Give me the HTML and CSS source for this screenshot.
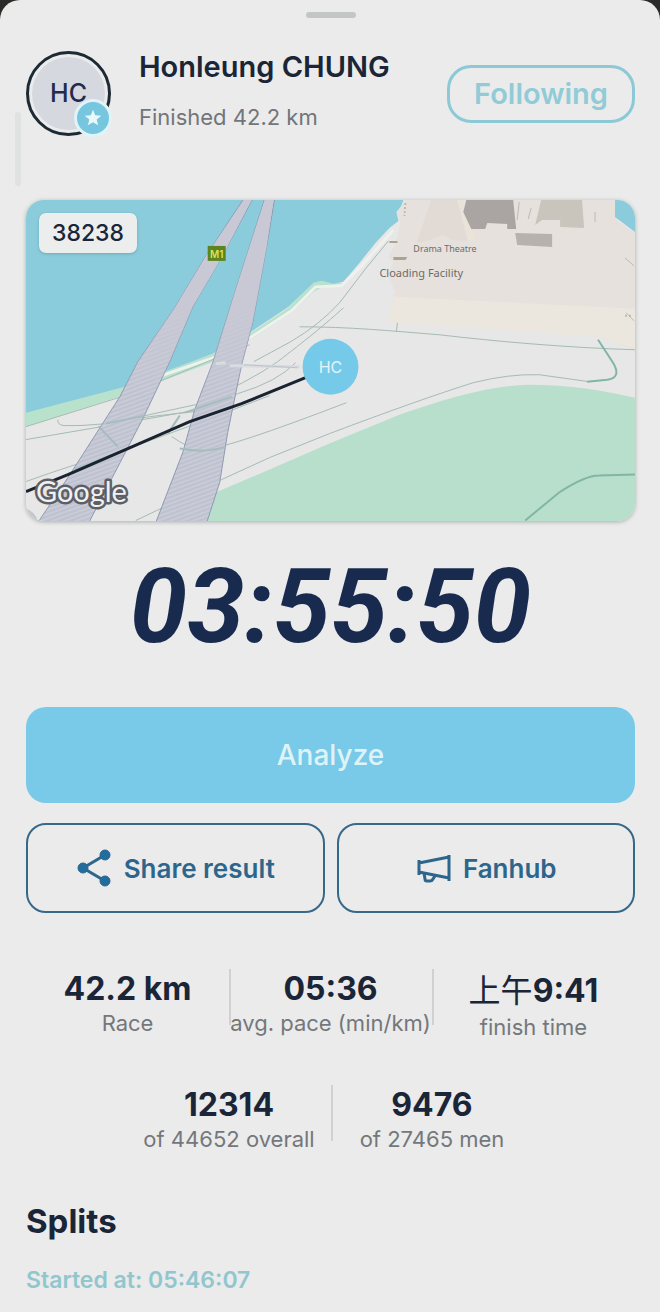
FILE: index.html
```html
<!DOCTYPE html>
<html lang="en">
  <head>
    <meta charset="utf-8">
    <meta name="viewport" content="width=device-width, initial-scale=1">
    <title>Honleung CHUNG - 42.2 km</title>
    <link rel="stylesheet" href="styles.css">
  </head>
  <body>
    <main class="sheet">
      <span class="handle"></span>
      <span class="scroll-thumb"></span>

      <header class="runner">
        <div class="avatar">
          <span class="avatar-initials">HC</span>
          <span class="avatar-badge">
            <svg viewBox="0 0 24 24" width="20" height="20" fill="#e9f8fa">
              <path d="M12 2l2.700 6.600 7.300.600-5.600 4.600 1.800 7L12 17l-6.200 3.800 1.800-7L2 9.200l7.300-.600z"/>
            </svg>
          </span>
        </div>
        <div class="runner-info">
          <h1>Honleung CHUNG</h1>
          <p>Finished 42.2 km</p>
        </div>
        <button class="follow" type="button">Following</button>
      </header>

      <section class="map">
        <svg class="map-canvas" viewBox="26 200 610 322" role="img" aria-label="Course map">
          <defs>
            <pattern id="hatch" width="4" height="4" patternUnits="userSpaceOnUse" patternTransform="rotate(-20)">
              <rect width="4" height="4" fill="#c9cbd6"/>
              <path d="M0 2h4" stroke="#b4b9ca"/>
            </pattern>
            <linearGradient id="deck" x1="0" y1="0" x2="0" y2="1">
              <stop offset="0.300" stop-color="#c9c9d5"/>
              <stop offset="0.600" stop-color="#c9c9d5" stop-opacity="0"/>
            </linearGradient>
          </defs>
          <rect x="26" y="200" width="610" height="322" fill="#e6e7e6"/>

          <!-- water and shore -->
          <path fill="#b9e2cd" d="M26 408L125 384L214 354L250 334L289 308L312 284L322 279L344 284L326 286L314 292L292 313L252 339L214 362L125 395L26 427z"/>
          <path fill="#8accdb" d="M26 200H404L402 206L397 212L399 221L390 228L376 243L360 263L344 282L334 284L322 281L314 283L289 307L250 333L213 354L170 370L125 387L26 413z"/>
          <path fill="none" stroke="#eef1ee" stroke-width="3" d="M162 376L214 358L252 337L292 311L316 287L342 286L362 266L394 230"/>

          <!-- opera house precinct -->
          <path fill="#e6e1dc" d="M405 200H616L618 221L636 233V350L600 337L388 322L395 296L389 292L389 256L396 244L401 223L398 213z"/>
          <path fill="#e6e7e6" d="M386 254L394 262L389 274L396 294L384 296z"/>
          <path fill="#ece7de" d="M395 297L636 309V349L600 337L388 322z"/>
          <path fill="#e2dad5" d="M432 200H458L468 241L452 240L443 235L431 240L417 243z"/>
          <path fill="#e9e3d9" d="M458 200H466L476 238L470 241z"/>
          <path fill="#aaa5a2" d="M467 200H514L517 229H508V224L488 223L486 229H472L464 212z"/>
          <path fill="#c9c5bd" d="M542 200H583L585 228L561 227V220H543L536 225z"/>
          <path fill="#b7b2ae" d="M516 233L553 234V247L518 245z"/>
          <path fill="#8accdb" d="M616 200H636V232L616 217z"/>
          <path fill="#aaa591" d="M394 257L408 257L406 260H394zM390 241H398V243H390z"/>
          <path fill="none" stroke="#bdb9b2" d="M532 208L529 219M520 202L518 220M596 212V222M626 258L635 266M627 313L635 321"/>
          <path fill="none" stroke="#b9bbb4" stroke-dasharray="2 2" stroke-width="2" d="M406 203L405 216M626 316H634"/>

          <!-- park -->
          <path fill="#b7dfcb" d="M206 522L216 493L270 470L330 444L400 415C450 398 490 386 530 385C570 385 605 391 636 398V522z"/>

          <!-- footpaths -->
          <g fill="none" stroke="#a5bbb4">
            <path d="M389 241L366 269L340 303Q320 325 291 342L254 362"/>
            <path d="M300 327C350 327 390 331 440 335C500 342 570 348 636 350"/>
            <path d="M344 308Q320 330 278 362Q250 382 196 405L145 416"/>
            <path d="M296 363Q278 382 238 394L194 412L150 417Q100 427 64 426Q57 425 58 420"/>
            <path d="M26 427L125 396L205 363L250 345"/>
            <path d="M26 440Q90 429 120 424L194 411M26 482Q70 466 128 449L194 425L270 396"/>
            <path d="M99 426L118 447M180 416L168 434M172 437Q190 450 205 450Q230 448 347 403"/>
            <path d="M136 521L222 480L270 458L330 434Q420 400 474 383Q510 374 540 375L590 382"/>
            <path d="M397 332L398 323"/>
          </g>
          <path fill="none" stroke="#82b5a5" stroke-width="2" d="M599 340L614 363Q623 378 608 380L588 382M526 521L560 493Q586 476 600 476L636 475"/>

          <!-- bridge decks -->
          <g stroke="#8f99b1">
            <path fill="url(#hatch)" d="M244 199L205 258L175 308L138 362L120 397L70 475L38 523H89L127 450L145 415L170 362L193 307L217 266L228 246L253 199z"/>
            <path fill="url(#hatch)" d="M265 199L253 237L237 287L213 363L195 410L183 453L156 523H207L220 483L228 433L242 365L253 323L267 247L275 199z"/>
          </g>
          <path fill="url(#deck)" d="M244 200L205 258L175 308L138 362L120 397L70 475L38 523H89L127 450L145 415L170 362L193 307L217 266L228 246L252 200z"/>
          <path fill="url(#deck)" d="M265 200L253 237L237 287L213 363L195 410L183 453L156 523H207L220 483L228 433L242 365L253 323L267 247L274 200z"/>
          <g fill="none" stroke="#a2bdbc" stroke-width="2">
            <path d="M99 427L118 447M75 470L128 449M106 424L145 416M180 416L168 434M185 413L232 397M180 449Q205 454 226 447"/>
          </g>
          <path fill="none" stroke="#d8dbe0" stroke-width="3" d="M216 364L226 363M230 366L300 367"/>
          <path fill="none" stroke="#bbc4c7" d="M244 365L298 368"/>

          <!-- course -->
          <path fill="none" stroke="#1a2431" stroke-width="3" d="M26 492L68 475L128 449L190 422L242 404L306 378"/>

          <rect x="208" y="246" width="18" height="15" fill="#5d841f"/>
          <text class="map-road" x="217" y="258" text-anchor="middle">M1</text>
          <text class="map-place-small" x="414" y="252">Drama Theatre</text>
          <text class="map-place" x="380" y="277">Cloading Facility</text>
          <path fill="#c4c8c8" d="M26 509Q35 512 38 522H26z"/>
          <text class="map-brand" x="36" y="503">Google</text>
          <circle cx="331" cy="367" r="28" fill="#75cae9"/>
          <text class="map-pin" x="331" y="373" text-anchor="middle">HC</text>
        </svg>
        <span class="bib">38238</span>
      </section>

      <p class="time">03:55:50</p>

      <div class="actions">
        <button class="btn btn-primary" type="button">Analyze</button>
        <button class="btn" type="button">
          <svg viewBox="0 0 36 38" width="36" height="38" fill="#236c9e" stroke="#2d668c">
            <path fill="none" stroke-width="3" d="M29 6L7 19L29 32"/>
            <circle cx="29" cy="6" r="5"/>
            <circle cx="7" cy="19" r="5"/>
            <circle cx="29" cy="32" r="5"/>
          </svg>
          Share result
        </button>
        <button class="btn" type="button">
          <svg viewBox="0 0 36 32" width="36" height="32" fill="none" stroke="#2d668c" stroke-width="3">
            <path d="M4 8V23M4 11L34 5M4 20L34 26M34 3V29"/>
            <path d="M9 21L10 27Q10 29 12 29H15Q17 29 18 27L20 24"/>
          </svg>
          Fanhub
        </button>
      </div>

      <section class="stats">
        <div class="stat">
          <strong>42.2 km</strong>
          <span>Race</span>
        </div>
        <div class="stat">
          <strong>05:36</strong>
          <span>avg. pace (min/km)</span>
        </div>
        <div class="stat stat-clock">
          <strong><span lang="zh">上午</span>9:41</strong>
          <span>finish time</span>
        </div>
        <div class="stat">
          <strong>12314</strong>
          <span>of 44652 overall</span>
        </div>
        <div class="stat">
          <strong>9476</strong>
          <span>of 27465 men</span>
        </div>
      </section>

      <section class="splits">
        <h2>Splits</h2>
        <p>Started at: 05:46:07</p>
      </section>
    </main>
  </body>
</html>
```
FILE: styles.css
```css
* {
  box-sizing: border-box;
}

body {
  margin: 0;
  background-color: #2b2c29;
  font-family: Inter, "Noto Sans CJK SC", sans-serif;
  color: #1b2538;
}

h1,
h2,
p {
  margin: 0;
}

button {
  font-family: inherit;
  cursor: pointer;
}

.sheet {
  position: relative;
  min-height: 100vh;
  padding: 12px 25px 16px 26px;
  background-color: #eaebea;
  border-radius: 20px 20px 0 0;
}

.handle {
  display: block;
  width: 50px;
  height: 6px;
  margin: 0 auto;
  border-radius: 3px;
  background-color: #c3c6c7;
}

.scroll-thumb {
  position: absolute;
  left: 15px;
  top: 112px;
  width: 6px;
  height: 74px;
  border-radius: 3px;
  background-color: #e0e1e1;
}

.runner {
  display: flex;
  align-items: center;
  gap: 28px;
  margin-top: 33px;
}

.avatar {
  position: relative;
  display: flex;
  align-items: center;
  justify-content: center;
  flex: none;
  width: 85px;
  height: 85px;
  border: 3px solid #1c2a35;
  border-radius: 50%;
}

.avatar-initials {
  width: 73px;
  height: 73px;
  border-radius: 50%;
  background-color: #d6d8e0;
  color: #222b4b;
  font-size: 25px;
  font-weight: 500;
  line-height: 73px;
  text-align: center;
}

.avatar-badge {
  position: absolute;
  right: -4px;
  bottom: -4px;
  display: flex;
  align-items: center;
  justify-content: center;
  width: 38px;
  height: 38px;
  border: 3px solid #e0f4f7;
  border-radius: 50%;
  background-color: #76c6df;
}

.runner-info {
  flex: 1;
  align-self: flex-start;
}

.runner-info h1 {
  font-size: 29px;
  font-weight: 600;
  line-height: 32px;
}

.runner-info p {
  margin-top: 20px;
  color: #72757b;
  font-size: 22px;
  line-height: 28px;
}

.follow {
  height: 58px;
  padding: 0 24px;
  border: 3px solid #8cc9d7;
  border-radius: 24px;
  background: none;
  color: #92cbd8;
  font-size: 29px;
  font-weight: 600;
}

.map {
  position: relative;
  margin-top: 64px;
  overflow: hidden;
  border-radius: 18px;
  box-shadow: 0 1px 4px #a9adad;
}

.map-canvas {
  display: block;
  width: 100%;
}

.map-road {
  fill: #d8e35a;
  font-size: 10px;
  font-weight: 600;
}

.map-place,
.map-place-small {
  fill: #6d6b68;
  font-family: "Noto Sans", sans-serif;
  font-size: 11px;
}

.map-place-small {
  font-size: 9px;
}

.map-brand {
  fill: #f1f1f1;
  stroke: #5c6066;
  stroke-width: 5px;
  stroke-linejoin: round;
  paint-order: stroke;
  font-family: Lato, sans-serif;
  font-size: 29px;
  font-weight: 400;
}

.map-pin {
  fill: #e0f4fa;
  font-size: 16px;
}

.bib {
  position: absolute;
  left: 13px;
  top: 13px;
  padding: 0 13px;
  border-radius: 7px;
  background-color: #eceeee;
  box-shadow: 0 1px 3px #6fa9b7;
  font-size: 23px;
  font-weight: 500;
  line-height: 40px;
}

.time {
  margin-top: 26px;
  color: #182b4e;
  font-family: Roboto, sans-serif;
  font-size: 103px;
  font-style: italic;
  font-weight: 700;
  line-height: 120px;
  text-align: center;
}

.actions {
  display: grid;
  grid-template-columns: 1fr 1fr;
  gap: 20px 12px;
  margin-top: 40px;
}

.btn {
  display: flex;
  align-items: center;
  justify-content: center;
  gap: 12px;
  height: 90px;
  padding: 0;
  border: 2px solid #36688a;
  border-radius: 20px;
  background: none;
  color: #2d668c;
  font-size: 26px;
  font-weight: 600;
}

.btn-primary {
  grid-column: 1 / -1;
  height: 96px;
  border: 0;
  background-color: #79cae9;
  color: #dff3f7;
  font-size: 28px;
  font-weight: 500;
}

.stats {
  display: flex;
  flex-wrap: wrap;
  justify-content: center;
  row-gap: 52px;
  margin-top: 56px;
}

.stat {
  display: flex;
  flex-direction: column;
  align-items: center;
  width: 33.33%;
  height: 64px;
  background: linear-gradient(#cfd1d2, #cfd1d2) left top / 2px 56px no-repeat;
  white-space: nowrap;
}

.stat:nth-child(1),
.stat:nth-child(4) {
  background: none;
}

.stat strong {
  font-size: 32px;
  font-weight: 700;
  line-height: 40px;
}

.stat > span {
  color: #74777b;
  font-size: 22px;
  line-height: 28px;
}

/* the Chinese day period needs a taller line */
.stat-clock strong {
  line-height: 44px;
}

.stat-clock strong span {
  font-weight: 400;
}

.splits {
  margin-top: 52px;
}

.splits h2 {
  font-size: 33px;
  font-weight: 700;
  line-height: 40px;
}

.splits p {
  margin-top: 25px;
  color: #91c6cf;
  font-size: 23px;
  font-weight: 600;
  line-height: 28px;
}
```
